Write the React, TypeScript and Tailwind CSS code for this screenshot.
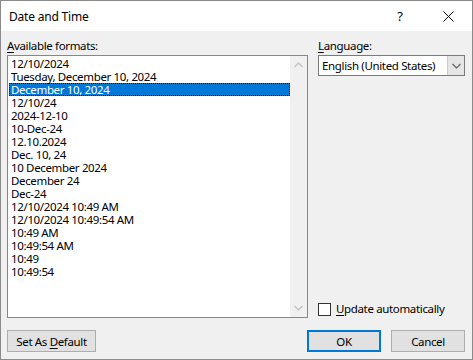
const formats = [
  '12/10/2024',
  'Tuesday, December 10, 2024',
  'December 10, 2024',
  '12/10/24',
  '2024-12-10',
  '10-Dec-24',
  '12.10.2024',
  'Dec. 10, 24',
  '10 December 2024',
  'December 24',
  'Dec-24',
  '12/10/2024 10:49 AM',
  '12/10/2024 10:49:54 AM',
  '10:49 AM',
  '10:49:54 AM',
  '10:49',
  '10:49:54',
];

function Chevron({ up = false }: { up?: boolean }) {
  return (
    <svg width="9" height="6" viewBox="0 0 9 6" className={up ? '' : 'rotate-180'}>
      <path d="M0.5 5 L4.5 1 L8.5 5" fill="none" stroke="#c2c2c2" strokeWidth="1.4" />
    </svg>
  );
}

export default function App() {
  return (
    <div className="w-[473px] h-[360px] flex flex-col border border-[#8a8a8a] bg-[#f0f0f0] text-[11.5px] tracking-[-0.35px] text-black font-['Segoe_UI','Noto_Sans',sans-serif] leading-[13px]">
      {/* title bar */}
      <div className="h-[30px] bg-white flex items-center pl-2 shrink-0">
        <span className="flex-1 text-[12px] tracking-[-0.2px]">Date and Time</span>
        <span className="w-[12px] text-center text-[13px] mr-[37px]">?</span>
        <svg width="11" height="11" viewBox="0 0 11 11" className="mr-[18px]">
          <path d="M0.5 0.5 L10.5 10.5 M10.5 0.5 L0.5 10.5" stroke="#000" strokeWidth="1" />
        </svg>
      </div>

      <div className="flex-1 flex flex-col px-[6px] pt-[7px] pb-[8px]">
        <div className="flex gap-[10px]">
          {/* left column */}
          <div className="w-[301px] flex flex-col">
            <div className="h-[16px] leading-[16px]">
              <span className="underline underline-offset-2">A</span>vailable formats:
            </div>
            <div className="mt-[1px] h-[263px] border border-[#828790] bg-white flex">
              <div className="flex-1 pt-[1px] pl-[1px]">
                {formats.map((f, i) =>
                  i === 2 ? (
                    <div
                      key={i}
                      className="h-[13px] leading-[11px] pl-[1px] bg-[#0078d7] text-white border border-dotted border-[#1a1a1a] whitespace-nowrap"
                    >
                      {f}
                    </div>
                  ) : (
                    <div key={i} className="h-[13px] leading-[13px] pl-[2px] whitespace-nowrap">
                      {f}
                    </div>
                  )
                )}
              </div>
              <div className="w-[17px] bg-[#f0f0f0] flex flex-col items-center justify-between py-[6px]">
                <Chevron up />
                <Chevron />
              </div>
            </div>
          </div>

          {/* right column */}
          <div className="w-[147px] flex flex-col">
            <div className="h-[16px] leading-[16px]">
              <span className="underline underline-offset-2">L</span>anguage:
            </div>
            <div className="mt-[1px] h-[21px] border border-[#7a7a7a] bg-white flex">
              <div className="flex-1 flex items-center pl-[3px] whitespace-nowrap">English (United States)</div>
              <div className="w-[17px] bg-[#e5e5e5] border-l border-[#cccccc] flex items-center justify-center">
                <svg width="9" height="6" viewBox="0 0 9 6">
                  <path d="M0.5 1 L4.5 5 L8.5 1" fill="none" stroke="#606060" strokeWidth="1.1" />
                </svg>
              </div>
            </div>
            <div className="flex-1" />
            <div className="flex items-center gap-[5px] mb-[1px]">
              <div className="w-[13px] h-[13px] border border-[#333] bg-white" />
              <span className="leading-[16px] whitespace-nowrap">
                <span className="underline underline-offset-2">U</span>pdate automatically
              </span>
            </div>
          </div>
        </div>

        {/* buttons */}
        <div className="mt-[12px] flex items-center">
          <button className="w-[89px] h-[22px] border border-[#adadad] bg-[#e1e1e1]">
            Set As <span className="underline underline-offset-2">D</span>efault
          </button>
          <div className="flex-1" />
          <button className="w-[74px] h-[22px] border-2 border-[#0078d7] bg-[#e1e1e1]">OK</button>
          <button className="ml-[10px] w-[74px] h-[22px] border border-[#adadad] bg-[#e1e1e1] mr-[1px]">
            Cancel
          </button>
        </div>
      </div>
    </div>
  );
}
